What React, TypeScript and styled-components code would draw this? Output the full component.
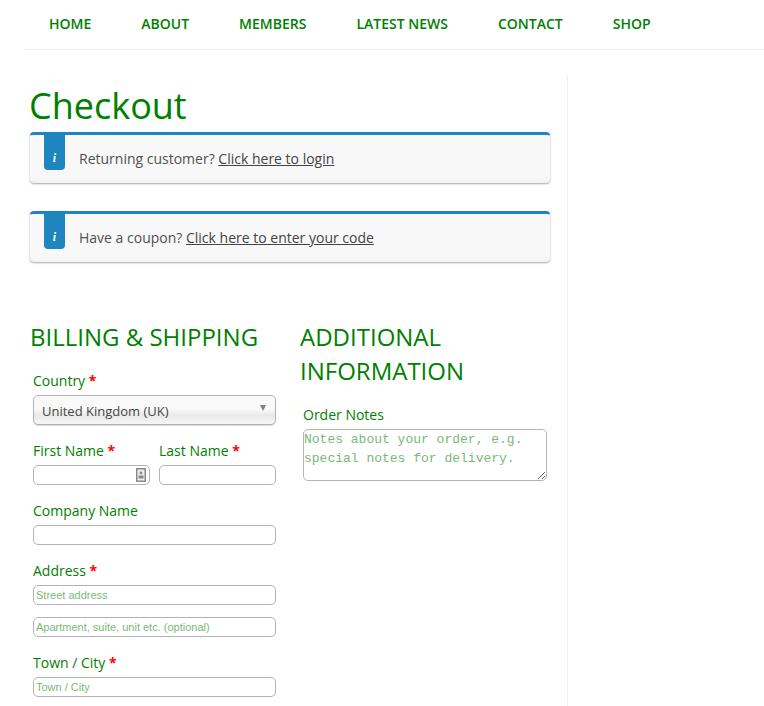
import React from 'react';
import styled, { createGlobalStyle } from 'styled-components';

const GlobalStyle = createGlobalStyle`
  html, body {
    margin: 0;
    background: #fff;
  }
  body {
    height: 706px;
    overflow: hidden;
    font-family: "Open Sans", "Noto Sans", sans-serif;
    color: #444;
  }
`;

const green = '#008000';

const Nav = styled.nav`
  display: flex;
  gap: 50px;
  height: 49px;
  margin-left: 24px;
  padding-left: 25px;
  border-bottom: 1px solid #f0f0f0;
  box-sizing: content-box;
`;

const NavLink = styled.a`
  font-size: 14px;
  font-weight: 600;
  line-height: 48px;
  color: ${green};
  text-transform: uppercase;
`;

const Main = styled.main`
  width: 544px;
  height: 631px;
  margin: 25px 0 0 24px;
  padding: 0 17px 0 6px;
  box-sizing: border-box;
  border-right: 1px solid #efefef;
  overflow: hidden;
`;

const Title = styled.h1`
  margin: 5px 0 1px -1px;
  font-size: 36px;
  font-weight: 400;
  line-height: 51px;
  color: ${green};
`;

const Notice = styled.div`
  position: relative;
  height: 51px;
  margin-bottom: 28px;
  padding: 14px 0 0 49px;
  box-sizing: border-box;
  border-top: 3px solid #1e85be;
  border-radius: 4px;
  background: #f8f8f8;
  box-shadow: 0 1px 2px rgba(0, 0, 0, 0.35), inset 0 -8px 8px -8px rgba(0, 0, 0, 0.05);
  font-size: 14px;
  line-height: 19px;
  color: #515151;

  a {
    color: #444;
    text-decoration: underline;
  }
`;

const NoticeBadge = styled.span`
  position: absolute;
  top: 0;
  left: 14px;
  width: 21px;
  height: 35px;
  border-radius: 0 0 4px 4px;
  background: #1e85be;
  color: #fff;
  font: italic 700 12px/46px "Liberation Serif", serif;
  text-align: center;
`;

const Columns = styled.div`
  display: grid;
  grid-template-columns: 250px 250px;
  gap: 20px;
  margin-top: 58px;
`;

const Column = styled.section`
  min-width: 0;
`;

const Heading = styled.h3`
  margin: 0 0 17px;
  font-size: 24px;
  font-weight: 400;
  line-height: 34px;
  color: ${green};
  text-transform: uppercase;
`;

const Field = styled.div`
  margin: 0 0 ${(p: { $gap?: number }) => p.$gap ?? 16}px 3px;
  width: 243px;
`;

const FieldRow = styled.div`
  display: grid;
  grid-template-columns: 117px 117px;
  gap: 9px;
  margin: 0 0 16px 3px;
  width: 243px;
`;

const Label = styled.label`
  display: block;
  font-size: 14px;
  line-height: 20px;
  margin-bottom: 4px;
  color: ${green};
`;

const Required = styled.span`
  color: #f00;
  font-weight: 700;
`;

const InputWrap = styled.div`
  position: relative;
`;

const Input = styled.input`
  display: block;
  width: 100%;
  height: 20px;
  padding: 0 2px;
  box-sizing: border-box;
  border: 1px solid #b3b3b3;
  border-radius: 5px;
  background: #fff;
  font: 11px "Liberation Sans", Arial, sans-serif;
  outline: none;

  &::placeholder {
    color: #79b979;
    opacity: 1;
  }
`;

const Select = styled.select`
  display: block;
  width: 100%;
  height: 30px;
  padding: 1px 8px 0;
  box-sizing: border-box;
  appearance: none;
  border: 1px solid #b3b3b3;
  border-radius: 5px;
  background: linear-gradient(#fafafa 45%, #e9e9e9 70%, #f6f6f6);
  box-shadow: 0 1px 1px rgba(0, 0, 0, 0.15);
  font: 13px "Open Sans", sans-serif;
  color: #444;
  outline: none;
`;

const SelectCaret = styled.span`
  position: absolute;
  top: 10px;
  right: 10px;
  border-left: 3.5px solid transparent;
  border-right: 3.5px solid transparent;
  border-top: 6px solid #808080;
  pointer-events: none;
`;

const ContactIcon = styled.svg`
  position: absolute;
  top: 3px;
  right: 4px;
  width: 10px;
  height: 14px;
`;

const Notes = styled.textarea`
  display: block;
  width: calc(100% + 1px);
  height: 52px;
  margin-top: 1px;
  padding: 0;
  box-sizing: border-box;
  border: 1px solid #b3b3b3;
  border-radius: 5px;
  font: 13px/19px "Liberation Mono", monospace;
  outline: none;
  overflow: hidden;

  &::placeholder {
    color: #79b979;
    opacity: 1;
  }
`;

const navItems = ['Home', 'About', 'Members', 'Latest News', 'Contact', 'Shop'];

const App: React.FC = () => {
  return (
    <>
      <GlobalStyle />
      <Nav>
        {navItems.map((item) => (
          <NavLink key={item}>{item}</NavLink>
        ))}
      </Nav>
      <Main>
        <Title>Checkout</Title>
        <Notice>
          <NoticeBadge>i</NoticeBadge>
          Returning customer? <a>Click here to login</a>
        </Notice>
        <Notice>
          <NoticeBadge>i</NoticeBadge>
          Have a coupon? <a>Click here to enter your code</a>
        </Notice>
        <Columns>
          <Column>
            <Heading>Billing &amp; Shipping</Heading>
            <Field>
              <Label>
                Country <Required>*</Required>
              </Label>
              <InputWrap>
                <Select defaultValue='uk'>
                  <option value='uk'>United Kingdom (UK)</option>
                </Select>
                <SelectCaret />
              </InputWrap>
            </Field>
            <FieldRow>
              <div>
                <Label>
                  First Name <Required>*</Required>
                </Label>
                <InputWrap>
                  <Input />
                  <ContactIcon viewBox='0 0 10 14'>
                    <rect x='0.75' y='0.75' width='8.5' height='12.5' fill='#eee' stroke='#8a8a8a' strokeWidth='1.5' />
                    <circle cx='5' cy='5' r='1.4' fill='#888' />
                    <rect x='2.5' y='7.5' width='5' height='3' fill='#888' />
                  </ContactIcon>
                </InputWrap>
              </div>
              <div>
                <Label>
                  Last Name <Required>*</Required>
                </Label>
                <Input />
              </div>
            </FieldRow>
            <Field>
              <Label>Company Name</Label>
              <Input />
            </Field>
            <Field $gap={12}>
              <Label>
                Address <Required>*</Required>
              </Label>
              <Input placeholder='Street address' />
            </Field>
            <Field>
              <Input placeholder='Apartment, suite, unit etc. (optional)' />
            </Field>
            <Field>
              <Label>
                Town / City <Required>*</Required>
              </Label>
              <Input placeholder='Town / City' />
            </Field>
          </Column>
          <Column>
            <Heading>Additional Information</Heading>
            <Field>
              <Label>Order Notes</Label>
              <Notes
                rows={2}
                placeholder='Notes about your order, e.g. special notes for delivery.'
              />
            </Field>
          </Column>
        </Columns>
      </Main>
    </>
  );
};

export default App;
